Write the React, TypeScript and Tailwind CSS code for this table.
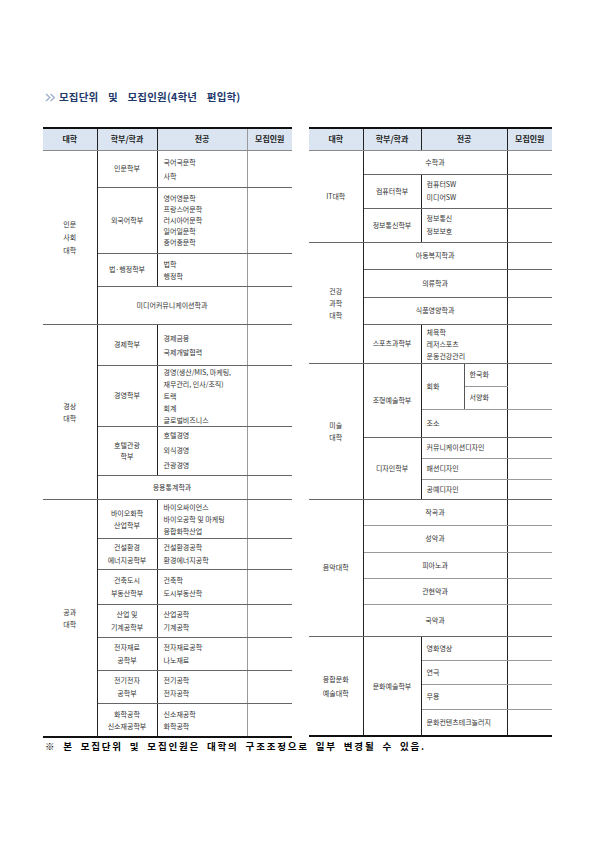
import React from 'react';

const FONT = { fontFamily: '"Noto Sans CJK KR", "Noto Sans", sans-serif' };

// border helpers
const LINE = 'border-b border-b-[#666]';
const SUB = 'border-b border-b-[#999]';
const VR = 'border-r border-r-[#222]';
const TXT = 'p-0 align-middle text-[7px] text-[#333] font-normal';

function Chevrons() {
  return (
    <svg width="11" height="9" viewBox="0 0 11 9" className="shrink-0">
      <path d="M1 1 L4.8 4.5 L1 8" fill="none" stroke="#a3b5cd" strokeWidth="1.5" />
      <path d="M5.5 1 L9.3 4.5 L5.5 8" fill="none" stroke="#a3b5cd" strokeWidth="1.5" />
    </svg>
  );
}

function HeaderRow({ right }: { right?: boolean }) {
  const th = 'p-0 align-middle text-center text-[8px] font-bold text-[#222] bg-[#dbe5f1] border-b border-b-[#8a8a8a]';
  return (
    <tr className="h-[22px]">
      <th className={`${th} ${VR}`}>대학</th>
      <th className={`${th} ${VR}`}>학부/학과</th>
      <th colSpan={right ? 2 : 1} className={`${th} border-r ${right ? 'border-r-[#222]' : 'border-r-[#999]'}`}>전공</th>
      <th className={th}>모집인원</th>
    </tr>
  );
}

function LeftTable() {
  const college = `${TXT} ${LINE} ${VR} text-center`;
  const dept = `${TXT} ${LINE} ${VR} text-center`;
  const major = `${TXT} ${LINE} text-left pl-[6px]`;
  const count = `${TXT} ${LINE} border-l border-l-[#999]`;
  return (
    <table className="table-fixed border-collapse border-y-2 border-[#111] w-[249px]">
      <colgroup>
        <col className="w-[54px]" />
        <col className="w-[60px]" />
        <col className="w-[90px]" />
        <col className="w-[45px]" />
      </colgroup>
      <thead>
        <HeaderRow />
      </thead>
      <tbody>
        {/* 인문사회대학 */}
        <tr className="h-[37px]">
          <td rowSpan={4} className={`${college} leading-[13px]`}>인문<br />사회<br />대학</td>
          <td className={dept}>인문학부</td>
          <td className={`${major} leading-[14px]`}>국어국문학<br />사학</td>
          <td className={count} />
        </tr>
        <tr className="h-[66px]">
          <td className={dept}>외국어학부</td>
          <td className={`${major} leading-[11px]`}>영어영문학<br />프랑스어문학<br />러시아어문학<br />일어일문학<br />중어중문학</td>
          <td className={count} />
        </tr>
        <tr className="h-[33px]">
          <td className={dept}>법·행정학부</td>
          <td className={`${major} leading-[12px]`}>법학<br />행정학</td>
          <td className={count} />
        </tr>
        <tr className="h-[38px]">
          <td colSpan={2} className={`${TXT} ${LINE} text-center`}>미디어커뮤니케이션학과</td>
          <td className={count} />
        </tr>

        {/* 경상대학 */}
        <tr className="h-[41px]">
          <td rowSpan={4} className={`${college} leading-[12px]`}>경상<br />대학</td>
          <td className={dept}>경제학부</td>
          <td className={`${major} leading-[14px]`}>경제금융<br />국제개발협력</td>
          <td className={count} />
        </tr>
        <tr className="h-[60px]">
          <td className={dept}>경영학부</td>
          <td className={`${major} leading-[12px]`}>경영(생산/MIS, 마케팅,<br />재무관리, 인사/조직)<br />트랙<br />회계<br />글로벌비즈니스</td>
          <td className={count} />
        </tr>
        <tr className="h-[49px]">
          <td className={`${dept} leading-[11px]`}>호텔관광<br />학부</td>
          <td className={`${major} leading-[15px]`}>호텔경영<br />외식경영<br />관광경영</td>
          <td className={count} />
        </tr>
        <tr className="h-[24px]">
          <td colSpan={2} className={`${TXT} ${LINE} text-center`}>응용통계학과</td>
          <td className={count} />
        </tr>

        {/* 공과대학 */}
        <tr className="h-[39px]">
          <td rowSpan={7} className={`${college} leading-[12px]`}>공과<br />대학</td>
          <td className={`${dept} leading-[12px]`}>바이오화학<br />산업학부</td>
          <td className={`${major} leading-[12px]`}>바이오싸이언스<br />바이오공학 및 마케팅<br />융합화학산업</td>
          <td className={count} />
        </tr>
        <tr className="h-[31px]">
          <td className={`${dept} leading-[13px]`}>건설환경<br />에너지공학부</td>
          <td className={`${major} leading-[13px]`}>건설환경공학<br />환경에너지공학</td>
          <td className={count} />
        </tr>
        <tr className="h-[35px]">
          <td className={`${dept} leading-[13px]`}>건축도시<br />부동산학부</td>
          <td className={`${major} leading-[13px]`}>건축학<br />도시부동산학</td>
          <td className={count} />
        </tr>
        <tr className="h-[33px]">
          <td className={`${dept} leading-[13px]`}>산업 및<br />기계공학부</td>
          <td className={`${major} leading-[13px]`}>산업공학<br />기계공학</td>
          <td className={count} />
        </tr>
        <tr className="h-[33px]">
          <td className={`${dept} leading-[13px]`}>전자재료<br />공학부</td>
          <td className={`${major} leading-[13px]`}>전자재료공학<br />나노재료</td>
          <td className={count} />
        </tr>
        <tr className="h-[33px]">
          <td className={`${dept} leading-[13px]`}>전기전자<br />공학부</td>
          <td className={`${major} leading-[13px]`}>전기공학<br />전자공학</td>
          <td className={count} />
        </tr>
        <tr className="h-[34px]">
          <td className={`${dept} leading-[12px]`}>화학공학<br />신소재공학부</td>
          <td className={`${major} leading-[12px]`}>신소재공학<br />화학공학</td>
          <td className={count} />
        </tr>
      </tbody>
    </table>
  );
}

function RightTable() {
  const college = `${TXT} ${LINE} ${VR} text-center`;
  const dept = `${TXT} ${LINE} ${VR} text-center`;
  const major = `${TXT} ${LINE} text-left pl-[5px]`;
  const subMajor = `${TXT} ${SUB} text-left pl-[5px]`;
  const wide = `${TXT} ${LINE} text-center`;
  const subWide = `${TXT} ${SUB} text-center`;
  const count = `${TXT} ${LINE} border-l border-l-[#222]`;
  const subCount = `${TXT} ${SUB} border-l border-l-[#222]`;
  return (
    <table className="table-fixed border-collapse border-y-2 border-[#111] w-[243px]">
      <colgroup>
        <col className="w-[54px]" />
        <col className="w-[58px]" />
        <col className="w-[43px]" />
        <col className="w-[43px]" />
        <col className="w-[45px]" />
      </colgroup>
      <thead>
        <HeaderRow right />
      </thead>
      <tbody>
        {/* IT대학 */}
        <tr className="h-[24px]">
          <td rowSpan={3} className={college}>IT대학</td>
          <td colSpan={3} className={wide}>수학과</td>
          <td className={count} />
        </tr>
        <tr className="h-[34px]">
          <td className={dept}>컴퓨터학부</td>
          <td colSpan={2} className={`${major} leading-[13px]`}>컴퓨터SW<br />미디어SW</td>
          <td className={count} />
        </tr>
        <tr className="h-[34px]">
          <td className={dept}>정보통신학부</td>
          <td colSpan={2} className={`${major} leading-[13px]`}>정보통신<br />정보보호</td>
          <td className={count} />
        </tr>

        {/* 건강과학대학 */}
        <tr className="h-[27px]">
          <td rowSpan={4} className={`${college} leading-[12px]`}>건강<br />과학<br />대학</td>
          <td colSpan={3} className={wide}>아동복지학과</td>
          <td className={count} />
        </tr>
        <tr className="h-[28px]">
          <td colSpan={3} className={wide}>의류학과</td>
          <td className={count} />
        </tr>
        <tr className="h-[27px]">
          <td colSpan={3} className={wide}>식품영양학과</td>
          <td className={count} />
        </tr>
        <tr className="h-[39px]">
          <td className={dept}>스포츠과학부</td>
          <td colSpan={2} className={`${major} leading-[12px]`}>체육학<br />레저스포츠<br />운동건강관리</td>
          <td className={count} />
        </tr>

        {/* 미술대학 */}
        <tr className="h-[23px]">
          <td rowSpan={6} className={`${college} leading-[12px]`}>미술<br />대학</td>
          <td rowSpan={3} className={dept}>조형예술학부</td>
          <td rowSpan={2} className={`${TXT} ${SUB} border-r border-r-[#555] text-left pl-[5px]`}>회화</td>
          <td className={`${TXT} ${SUB} text-left pl-[5px]`}>한국화</td>
          <td rowSpan={2} className={subCount} />
        </tr>
        <tr className="h-[23px]">
          <td className={`${TXT} ${SUB} text-left pl-[5px]`}>서양화</td>
        </tr>
        <tr className="h-[28px]">
          <td colSpan={2} className={major}>조소</td>
          <td className={count} />
        </tr>
        <tr className="h-[21px]">
          <td rowSpan={3} className={dept}>디자인학부</td>
          <td colSpan={2} className={subMajor}>커뮤니케이션디자인</td>
          <td className={subCount} />
        </tr>
        <tr className="h-[21px]">
          <td colSpan={2} className={subMajor}>패션디자인</td>
          <td className={subCount} />
        </tr>
        <tr className="h-[20px]">
          <td colSpan={2} className={major}>공예디자인</td>
          <td className={count} />
        </tr>

        {/* 음악대학 */}
        <tr className="h-[26px]">
          <td rowSpan={5} className={college}>음악대학</td>
          <td colSpan={3} className={`${subWide} border-l border-l-[#222]`}>작곡과</td>
          <td className={subCount} />
        </tr>
        <tr className="h-[27px]">
          <td colSpan={3} className={subWide}>성악과</td>
          <td className={subCount} />
        </tr>
        <tr className="h-[26px]">
          <td colSpan={3} className={subWide}>피아노과</td>
          <td className={subCount} />
        </tr>
        <tr className="h-[26px]">
          <td colSpan={3} className={subWide}>관현악과</td>
          <td className={subCount} />
        </tr>
        <tr className="h-[32px]">
          <td colSpan={3} className={wide}>국악과</td>
          <td className={count} />
        </tr>

        {/* 융합문화예술대학 */}
        <tr className="h-[24px]">
          <td rowSpan={4} className={`${college} leading-[14px]`}>융합문화<br />예술대학</td>
          <td rowSpan={4} className={dept}>문화예술학부</td>
          <td colSpan={2} className={subMajor}>영화영상</td>
          <td className={subCount} />
        </tr>
        <tr className="h-[24px]">
          <td colSpan={2} className={subMajor}>연극</td>
          <td className={subCount} />
        </tr>
        <tr className="h-[25px]">
          <td colSpan={2} className={subMajor}>무용</td>
          <td className={subCount} />
        </tr>
        <tr className="h-[27px]">
          <td colSpan={2} className={major}>문화컨텐츠테크놀러지</td>
          <td className={count} />
        </tr>
      </tbody>
    </table>
  );
}

export default function App() {
  return (
    <div className="w-[595px] h-[841px] bg-white overflow-hidden" style={FONT}>
      <div className="pt-[90px] pl-[45px] flex items-center gap-[3px] h-[104px]">
        <Chevrons />
        <h2 className="text-[10.5px] leading-[14px] font-bold text-[#22396b] tracking-[0.2px] [word-spacing:7px]">
          모집단위 및 모집인원(4학년 편입학)
        </h2>
      </div>
      <div className="mt-[23px] pl-[43px] flex items-start gap-[17px]">
        <LeftTable />
        <RightTable />
      </div>
      <p className="mt-[2px] pl-[45px] text-[9.5px] leading-[12px] font-bold text-black tracking-[1.8px] [word-spacing:3px]">
        ※ 본 모집단위 및 모집인원은 대학의 구조조정으로 일부 변경될 수 있음.
      </p>
    </div>
  );
}
